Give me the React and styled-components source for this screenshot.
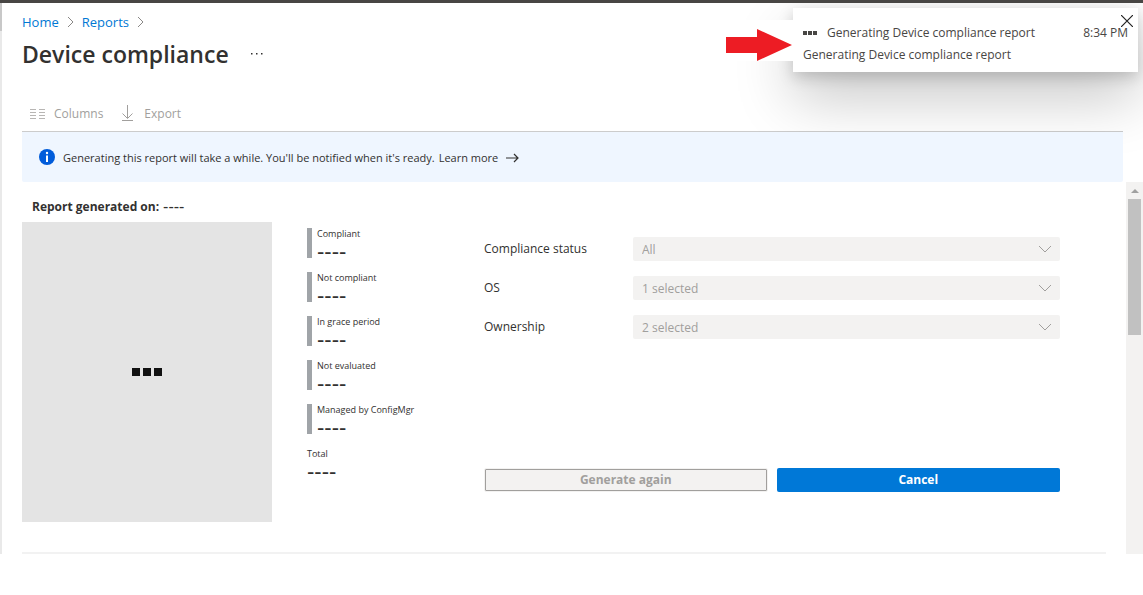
import React from "react";
import styled, { createGlobalStyle } from "styled-components";

const GlobalStyle = createGlobalStyle`
    * {
        box-sizing: border-box;
    }
    body {
        margin: 0;
        background: #fff;
        color: #323130;
        font-family: "Open Sans", "Noto Sans", sans-serif;
        font-size: 12px;
        line-height: 18px;
    }
    button, select {
        font-family: inherit;
        font-size: inherit;
    }
`;

const Page = styled.div`
    position: relative;
    border-top: 3px solid #484644;
    overflow: hidden;
    min-height: 100vh;
`;

const Frame = styled.div`
    display: flex;
`;

const Rail = styled.div`
    width: 2px;
    flex: none;
    background: linear-gradient(#c8c8c8 28px, #e9e9e9 28px);
`;

const Blade = styled.main`
    flex: 1;
    min-width: 0;
    padding-left: 20px;
`;

const Breadcrumb = styled.nav`
    display: flex;
    align-items: center;
    gap: 8px;
    padding-top: 10px;
    font-size: 13px;
    a {
        color: #0078d4;
        text-decoration: none;
    }
`;

const TitleRow = styled.div`
    display: flex;
    align-items: center;
    gap: 22px;
    height: 32px;
    margin-top: 7px;
    h1 {
        margin: 0;
        font-size: 23px;
        font-weight: 600;
        line-height: 32px;
    }
`;

const IconButton = styled.button`
    display: flex;
    padding: 0;
    border: 0;
    background: none;
    color: #323130;
`;

const Toolbar = styled.div`
    display: flex;
    align-items: center;
    gap: 16px;
    height: 36px;
    margin: 26px 20px 0 0;
    padding-left: 7px;
    border-bottom: 1px solid #ccc;
`;

const Command = styled.button`
    display: flex;
    align-items: center;
    gap: 8px;
    padding: 0;
    border: 0;
    background: none;
    color: #a19f9d;
    line-height: 18px;
`;

const InfoBar = styled.div`
    position: relative;
    z-index: 2;
    display: flex;
    align-items: center;
    gap: 8px;
    height: 50px;
    margin-right: 20px;
    padding-left: 17px;
    border-radius: 0 0 2px 2px;
    background: #eff6ff;
    a {
        display: inline-flex;
        align-items: center;
        gap: 8px;
        color: inherit;
        text-decoration: none;
    }
`;

const InfoText = styled.span`
    display: flex;
    gap: 4px;
    padding-top: 1px;
    font-size: 11px;
`;

const ScrollArea = styled.div`
    display: flex;
    gap: 20px;
`;

const Content = styled.section`
    flex: 1;
    min-width: 0;
    border-bottom: 2px solid #f2f2f2;
`;

const GeneratedOn = styled.div`
    display: flex;
    align-items: center;
    gap: 4px;
    height: 40px;
    padding: 10px 0 0 10px;
    font-weight: 700;
`;

const Dashes = styled.span`
    font-family: "Liberation Sans", Arial, sans-serif;
    font-size: ${(props) => props.$size}px;
    font-weight: 400;
    line-height: 18px;
`;

const Report = styled.div`
    display: flex;
    align-items: flex-start;
    padding: 0 46px 30px 0;
`;

const ChartPlaceholder = styled.div`
    display: flex;
    align-items: center;
    justify-content: center;
    flex: none;
    width: 250px;
    height: 300px;
    margin-right: 35px;
    background: #e4e4e4;
`;

const Dots = styled.div`
    display: flex;
    gap: ${(props) => props.$gap}px;
    i {
        width: ${(props) => props.$size}px;
        height: ${(props) => props.$size}px;
        background: ${(props) => props.$color};
    }
`;

const Legend = styled.dl`
    display: flex;
    flex-direction: column;
    flex: none;
    gap: 14px;
    width: 177px;
    margin: 6px 0 0;
`;

const LegendItem = styled.div`
    height: 30px;
    padding-left: ${(props) => (props.$plain ? 0 : 5)}px;
    border-left: ${(props) => (props.$plain ? 0 : 5)}px solid #a0a4a8;
    dt {
        font-size: 9px;
        line-height: 12px;
    }
    dd {
        display: flex;
        margin: 3px 0 0;
    }
`;

const Filters = styled.form`
    display: flex;
    flex-direction: column;
    flex: 1;
    min-width: 0;
    gap: 15px;
    margin-top: 15px;
`;

const Field = styled.div`
    display: grid;
    grid-template-columns: 149px 1fr;
    align-items: center;
    height: 24px;
    svg {
        grid-area: 1 / 2;
        justify-self: end;
        margin-right: 8px;
        pointer-events: none;
    }
`;

const Select = styled.select`
    grid-area: 1 / 2;
    width: 100%;
    height: 24px;
    padding: 0 9px;
    border: 0;
    border-radius: 2px;
    background: #f3f2f1;
    color: #a19f9d;
    appearance: none;
    opacity: 1;
`;

const Actions = styled.div`
    display: grid;
    grid-template-columns: 1fr 1fr;
    gap: 9px;
    margin-top: 114px;
`;

const ActionButton = styled.button`
    height: 24px;
    padding: 0;
    border: ${(props) => (props.$primary ? "0" : "1px solid #f3f2f1")};
    border-radius: 2px;
    background: ${(props) => (props.$primary ? "#0078d7" : "#f3f2f1")};
    box-shadow: ${(props) => (props.$primary ? "none" : "inset 0 0 0 1px #a19f9d")};
    color: ${(props) => (props.$primary ? "#fff" : "#a19f9d")};
    font-weight: 700;
    line-height: 18px;
`;

const Scrollbar = styled.div`
    display: flex;
    flex-direction: column;
    align-items: center;
    width: 17px;
    flex: none;
    background: #f3f2f1;
    svg {
        flex: none;
    }
`;

const Thumb = styled.div`
    width: 13px;
    height: 136px;
    background: #c1c1c1;
`;

const Toast = styled.aside`
    position: absolute;
    z-index: 1;
    top: 5px;
    right: 5px;
    width: 345px;
    height: 64px;
    padding: 16px 10px 0;
    background: #fff;
    box-shadow: 0 26px 58px rgba(0, 0, 0, 0.22), 0 5px 14px rgba(0, 0, 0, 0.18);
    color: #484644;
    p {
        margin: 4px 0 0;
    }
`;

const ToastHead = styled.div`
    display: flex;
    align-items: center;
    gap: 10px;
    time {
        margin-left: auto;
    }
`;

const CloseButton = styled(IconButton)`
    position: absolute;
    top: 7px;
    right: 5px;
`;

const Pointer = styled.div`
    position: absolute;
    z-index: 1;
    top: 17px;
    right: 350px;
    display: flex;
    align-items: flex-end;
    width: 67px;
    height: 41px;
    background: #fff;
`;

const Chevron = () => (
    <svg width="7" height="12" viewBox="0 0 7 12" fill="none" stroke="#8a8886">
        <path d="M1 1l5 5-5 5" />
    </svg>
);

const legend = ["Compliant", "Not compliant", "In grace period", "Not evaluated", "Managed by ConfigMgr"];

const filters = [
    { id: "status", label: "Compliance status", value: "All" },
    { id: "os", label: "OS", value: "1 selected" },
    { id: "ownership", label: "Ownership", value: "2 selected" },
];

const App = () => {
    return (
        <Page>
            <GlobalStyle />
            <Frame>
                <Rail />
                <Blade>
                    <Breadcrumb>
                        <a href="#home">Home</a>
                        <Chevron />
                        <a href="#reports">Reports</a>
                        <Chevron />
                    </Breadcrumb>
                    <TitleRow>
                        <h1>Device compliance</h1>
                        <IconButton aria-label="More">
                            <svg width="12" height="2" viewBox="0 0 12 2" fill="currentColor">
                                <path d="M0 0h1.500v1.500H0zM5 0h1.500v1.500H5zM10 0h1.500v1.500H10z" />
                            </svg>
                        </IconButton>
                    </TitleRow>
                    <Toolbar>
                        <Command disabled>
                            <svg width="17" height="12" viewBox="0 0 17 12" stroke="#b8b6b4" strokeWidth="1">
                                <path d="M1 1.500h6M10 1.500h6M1 4.500h6M10 4.500h6M1 7.500h6M10 7.500h6M1 10.500h6M10 10.500h6" />
                            </svg>
                            Columns
                        </Command>
                        <Command disabled>
                            <svg width="17" height="18" viewBox="0 0 17 18" fill="none" stroke="#a19f9d">
                                <path d="M8.500 0v13M3.500 8.500l5 5 5-5M3 15.500h11" />
                            </svg>
                            Export
                        </Command>
                    </Toolbar>
                    <InfoBar>
                        <svg width="16" height="16" viewBox="0 0 16 16">
                            <circle cx="8" cy="8" r="8" fill="#015cda" />
                            <circle cx="8" cy="4" r="1.200" fill="#fff" />
                            <path d="M7 6.500h2v6.500H7z" fill="#fff" />
                        </svg>
                        <InfoText>
                            Generating this report will take a while. You'll be notified when it's ready.
                            <a href="#learn">
                                Learn more
                                <svg width="13" height="10" viewBox="0 0 13 10" fill="none" stroke="#323130" strokeWidth="1.200">
                                    <path d="M0 5h12M8 1l4 4-4 4" />
                                </svg>
                            </a>
                        </InfoText>
                    </InfoBar>
                    <ScrollArea>
                        <Content>
                            <GeneratedOn>
                                Report generated on: <Dashes $size={16}>----</Dashes>
                            </GeneratedOn>
                            <Report>
                                <ChartPlaceholder>
                                    <Dots $size={8} $gap={3} $color="#111"><i /><i /><i /></Dots>
                                </ChartPlaceholder>
                                <Legend>
                                    {legend.map((name) => (
                                        <LegendItem key={name}>
                                            <dt>{name}</dt>
                                            <dd><Dashes $size={22}>----</Dashes></dd>
                                        </LegendItem>
                                    ))}
                                    <LegendItem $plain>
                                        <dt>Total</dt>
                                        <dd><Dashes $size={22}>----</Dashes></dd>
                                    </LegendItem>
                                </Legend>
                                <Filters>
                                    {filters.map(({ id, label, value }) => (
                                        <Field key={id}>
                                            <label htmlFor={id}>{label}</label>
                                            <Select id={id} disabled>
                                                <option>{value}</option>
                                            </Select>
                                            <svg width="14" height="8" viewBox="0 0 14 8" fill="none" stroke="#a19f9d">
                                                <path d="M1 1l6 6 6-6" />
                                            </svg>
                                        </Field>
                                    ))}
                                    <Actions>
                                        <ActionButton type="button" disabled>Generate again</ActionButton>
                                        <ActionButton type="button" $primary>Cancel</ActionButton>
                                    </Actions>
                                </Filters>
                            </Report>
                        </Content>
                        <Scrollbar>
                            <svg width="17" height="17" viewBox="0 0 17 17">
                                <path d="M5 11h8L9 7z" fill="#a0a0a0" />
                            </svg>
                            <Thumb />
                        </Scrollbar>
                    </ScrollArea>
                </Blade>
            </Frame>
            <Toast>
                <ToastHead>
                    <Dots $size={4} $gap={1} $color="#484644"><i /><i /><i /></Dots>
                    <span>Generating Device compliance report</span>
                    <time>8:34 PM</time>
                </ToastHead>
                <p>Generating Device compliance report</p>
                <CloseButton aria-label="Close">
                    <svg width="12" height="12" viewBox="0 0 12 12" stroke="#222" strokeWidth="1.200">
                        <path d="M0 0l12 12M12 0L0 12" />
                    </svg>
                </CloseButton>
            </Toast>
            <Pointer>
                <svg width="66" height="32" viewBox="0 0 66 32" fill="#ed1c24">
                    <path d="M0 8h31V0l35 16-35 16v-8H0z" />
                </svg>
            </Pointer>
        </Page>
    );
};

export default App;
